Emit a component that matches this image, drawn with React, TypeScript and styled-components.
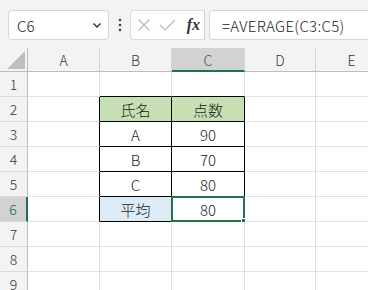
import React from "react";
import styled, { createGlobalStyle, css } from "styled-components";

const Global = createGlobalStyle`
  html, body { margin: 0; padding: 0; background: #ffffff; }
  body { font-family: "Noto Sans CJK JP", "Noto Sans", sans-serif; overflow: hidden; }
`;

const Page = styled.div`
  width: 368px;
  height: 290px;
  overflow: hidden;
  background: #fff;
`;

const Toolbar = styled.div`
  height: 48px;
  box-sizing: border-box;
  background: #f3f3f3;
  display: flex;
  align-items: flex-start;
  padding: 10px 0 0 8px;
`;

const NameBox = styled.div`
  width: 101px;
  height: 30px;
  box-sizing: border-box;
  background: #fff;
  border: 1px solid #d6d6d6;
  border-radius: 4px;
  display: flex;
  align-items: center;
  justify-content: space-between;
  padding: 0 6px 0 8px;
  font-size: 15px;
  font-weight: 300;
  color: #222;
`;

const Dots = styled.div`
  width: 21px;
  height: 30px;
  display: flex;
  align-items: center;
  justify-content: center;
`;

const ActionBox = styled.div`
  width: 75px;
  height: 30px;
  box-sizing: border-box;
  background: #fff;
  border: 1px solid #dcdcdc;
  border-right: none;
  border-radius: 4px 0 0 4px;
  display: flex;
  align-items: center;
  padding-left: 6px;
  gap: 8px;
`;

const Fx = styled.span`
  font-family: "Liberation Serif", serif;
  font-style: italic;
  font-weight: bold;
  font-size: 16px;
  color: #333;
  padding: 0 4px 0 2px;
  border-right: 1px solid #d0d0d0;
  line-height: 28px;
  margin-left: auto;
`;

const FormulaBox = styled.div`
  flex: 1;
  height: 30px;
  margin-left: 4px;
  box-sizing: border-box;
  background: #fff;
  border: 1px solid #d6d6d6;
  border-right: none;
  border-radius: 4px 0 0 4px;
  display: flex;
  align-items: center;
  padding-left: 12px;
  font-size: 15px;
  font-weight: 300;
  color: #222;
  letter-spacing: 0.3px;
`;

const Grid = styled.div`
  display: grid;
  grid-template-columns: 28px 72px 72px 73px 71px 72px;
  grid-template-rows: 24px repeat(9, 25px);
`;

const Corner = styled.div`
  background: #f3f3f3;
  border-right: 1px solid #bdbdbd;
  border-bottom: 1px solid #bdbdbd;
  box-sizing: border-box;
  position: relative;
  &::after {
    content: "";
    position: absolute;
    right: 2px;
    bottom: 2px;
    width: 0;
    height: 0;
    border-left: 18px solid transparent;
    border-bottom: 18px solid #bfbfbf;
  }
`;

const ColHead = styled.div<{ $sel?: boolean }>`
  box-sizing: border-box;
  background: ${(p) => (p.$sel ? "#d2d2d2" : "#f3f3f3")};
  border-right: 1px solid #d4d4d4;
  border-bottom: ${(p) => (p.$sel ? "2px solid #217346" : "1px solid #bdbdbd")};
  color: ${(p) => (p.$sel ? "#1f6b41" : "#333")};
  font-size: 14px;
  font-weight: 300;
  display: flex;
  align-items: center;
  justify-content: center;
  padding-top: ${(p) => (p.$sel ? "1px" : "0")};
`;

const RowHead = styled.div<{ $sel?: boolean }>`
  box-sizing: border-box;
  background: ${(p) => (p.$sel ? "#d2d2d2" : "#f3f3f3")};
  border-right: ${(p) => (p.$sel ? "2px solid #217346" : "1px solid #bdbdbd")};
  border-bottom: 1px solid #dadada;
  color: ${(p) => (p.$sel ? "#1f6b41" : "#333")};
  font-size: 14px;
  font-weight: 300;
  display: flex;
  align-items: center;
  justify-content: center;
`;

const Cell = styled.div<{ $bg?: string; $rb?: boolean; $bb?: boolean; $sel?: boolean }>`
  box-sizing: border-box;
  position: relative;
  background: ${(p) => p.$bg || "#fff"};
  border-right: 1px solid ${(p) => (p.$rb ? "#000" : "#e1e1e1")};
  border-bottom: 1px solid ${(p) => (p.$bb ? "#000" : "#e1e1e1")};
  font-size: 15px;
  font-weight: 300;
  color: #222;
  display: flex;
  align-items: center;
  justify-content: center;
  ${(p) =>
    p.$sel &&
    css`
      &::before {
        content: "";
        position: absolute;
        left: -1px;
        top: -1px;
        right: -1px;
        bottom: -1px;
        border: 2px solid #217346;
        pointer-events: none;
      }
      &::after {
        content: "";
        position: absolute;
        right: -4px;
        bottom: -4px;
        width: 7px;
        height: 7px;
        background: #217346;
        border: 1px solid #fff;
        box-sizing: border-box;
      }
    `}
`;

const cols = ["A", "B", "C", "D", "E"];
type CellData = { text?: string; bg?: string };
const data: Record<string, CellData> = {
  B2: { text: "氏名", bg: "#c6e0b4" },
  C2: { text: "点数", bg: "#c6e0b4" },
  B3: { text: "A" },
  C3: { text: "90" },
  B4: { text: "B" },
  C4: { text: "70" },
  B5: { text: "C" },
  C5: { text: "80" },
  B6: { text: "平均", bg: "#ddebf7" },
  C6: { text: "80" },
};

const inTable = (c: number, r: number) => c >= 1 && c <= 2 && r >= 2 && r <= 6;

export default function App() {
  const rows = Array.from({ length: 9 }, (_, i) => i + 1);
  return (
    <Page>
      <Global />
      <Toolbar>
        <NameBox>
          <span>C6</span>
          <svg width="10" height="10" viewBox="0 0 10 10">
            <path d="M1.5 3.5 L5 7 L8.5 3.5" fill="none" stroke="#333" strokeWidth="1.5" />
          </svg>
        </NameBox>
        <Dots>
          <svg width="4" height="14" viewBox="0 0 4 14">
            <circle cx="2" cy="2" r="1.3" fill="#444" />
            <circle cx="2" cy="7" r="1.3" fill="#444" />
            <circle cx="2" cy="12" r="1.3" fill="#444" />
          </svg>
        </Dots>
        <ActionBox>
          <svg width="14" height="14" viewBox="0 0 14 14">
            <path d="M1.5 1.5 L12.5 12.5 M12.5 1.5 L1.5 12.5" stroke="#b8b8b8" strokeWidth="1.2" fill="none" />
          </svg>
          <svg width="17" height="14" viewBox="0 0 17 14">
            <path d="M1 7 L6 12 L16 2" stroke="#b8b8b8" strokeWidth="1.2" fill="none" />
          </svg>
          <Fx>fx</Fx>
        </ActionBox>
        <FormulaBox>=AVERAGE(C3:C5)</FormulaBox>
      </Toolbar>
      <Grid>
        <Corner />
        {cols.map((c) => (
          <ColHead key={c} $sel={c === "C"}>
            {c}
          </ColHead>
        ))}
        {rows.map((r) => (
          <React.Fragment key={r}>
            <RowHead $sel={r === 6}>{r}</RowHead>
            {cols.map((c, ci) => {
              const key = `${c}${r}`;
              const d = data[key] || {};
              const rb = inTable(ci, r) || inTable(ci + 1, r);
              const bb = inTable(ci, r) || inTable(ci, r + 1);
              return (
                <Cell key={key} $bg={d.bg} $rb={rb} $bb={bb} $sel={key === "C6"}>
                  {d.text}
                </Cell>
              );
            })}
          </React.Fragment>
        ))}
      </Grid>
    </Page>
  );
}
